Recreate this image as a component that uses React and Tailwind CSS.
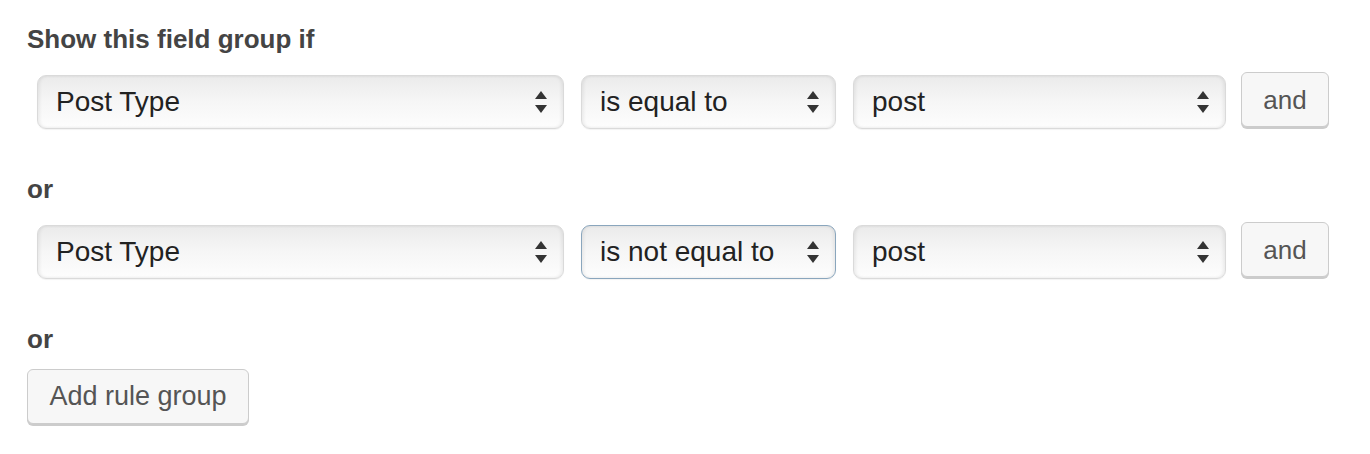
import React from "react";

function Arrows() {
  return (
    <svg width="14" height="26" viewBox="0 0 14 26" className="shrink-0">
      <path d="M7 2 L13 10 L1 10 Z" fill="#333" />
      <path d="M1 16 L13 16 L7 24 Z" fill="#333" />
    </svg>
  );
}

function FakeSelect({ value, width, focused = false }) {
  return (
    <div
      className={`mt-[3px] flex h-[54px] items-center justify-between rounded-[9px] border bg-gradient-to-b from-[#ebebeb] via-[#f6f6f6] to-[#fdfdfd] pl-[18px] pr-[15px] shadow-[inset_2px_0_3px_rgba(0,0,0,0.06),inset_-2px_0_3px_rgba(0,0,0,0.06),0_1px_1px_rgba(0,0,0,0.05)] ${
        focused ? "border-[#8aa6bd]" : "border-[#dadada]"
      } ${width}`}
    >
      <span className="text-[28px] leading-none text-[#222]">{value}</span>
      <Arrows />
    </div>
  );
}

function Button({ children, className = "" }) {
  return (
    <button
      className={`h-[55px] rounded-[6px] border border-[#cccccc] bg-[#f7f7f7] leading-none text-[#555] shadow-[0_2px_0_#cccccc] ${className}`}
    >
      {children}
    </button>
  );
}

function RuleRow({ rule }) {
  return (
    <div className="ml-[10px] flex items-start">
      <FakeSelect value={rule.param} width="w-[527px]" />
      <div className="ml-[17px]">
        <FakeSelect value={rule.operator} width="w-[255px]" focused={rule.focused} />
      </div>
      <div className="ml-[17px]">
        <FakeSelect value={rule.value} width="w-[373px]" />
      </div>
      <Button className="ml-[15px] w-[88px] text-[26px]">and</Button>
    </div>
  );
}

const groups = [
  { param: "Post Type", operator: "is equal to", value: "post" },
  { param: "Post Type", operator: "is not equal to", value: "post", focused: true },
];

export default function App() {
  return (
    <div
      className="h-[454px] w-[1370px] bg-white pl-[27px] pt-[23px]"
      style={{ fontFamily: '"Liberation Sans", Arial, sans-serif' }}
    >
      <h4 className="text-[26px] font-bold leading-[32px] text-[#444]">Show this field group if</h4>
      <div className="mt-[17px]">
        <RuleRow rule={groups[0]} />
      </div>
      <div className="mt-[44px] text-[26px] font-bold leading-[32px] text-[#444]">or</div>
      <div className="mt-[17px]">
        <RuleRow rule={groups[1]} />
      </div>
      <div className="mt-[44px] text-[26px] font-bold leading-[32px] text-[#444]">or</div>
      <Button className="mt-[14px] w-[222px] text-[27px]">Add rule group</Button>
    </div>
  );
}
